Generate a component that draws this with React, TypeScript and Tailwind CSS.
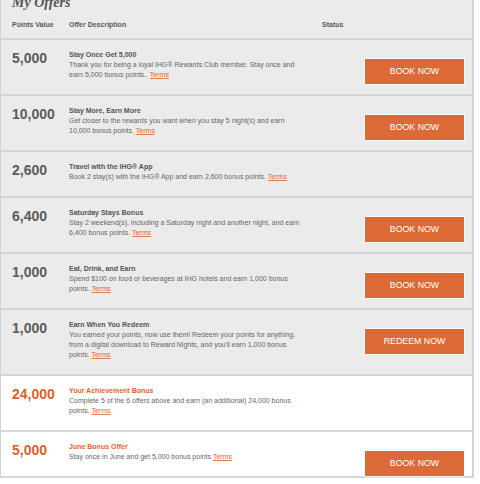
import React from "react";

type Offer = {
  points: string;
  title: string;
  lines: string[];
  action?: string;
  featured?: boolean;
};

const offers: Offer[] = [
  {
    points: "5,000",
    title: "Stay Once Get 5,000",
    lines: [
      "Thank you for being a loyal IHG® Rewards Club member. Stay once and",
      "earn 5,000 bonus points.. ",
    ],
    action: "BOOK NOW",
  },
  {
    points: "10,000",
    title: "Stay More, Earn More",
    lines: [
      "Get closer to the rewards you want when you stay 5 night(s) and earn",
      "10,000 bonus points. ",
    ],
    action: "BOOK NOW",
  },
  {
    points: "2,600",
    title: "Travel with the IHG® App",
    lines: ["Book 2 stay(s) with the IHG® App and earn 2,600 bonus points. "],
  },
  {
    points: "6,400",
    title: "Saturday Stays Bonus",
    lines: [
      "Stay 2 weekend(s), including a Saturday night and another night, and earn",
      "6,400 bonus points. ",
    ],
    action: "BOOK NOW",
  },
  {
    points: "1,000",
    title: "Eat, Drink, and Earn",
    lines: [
      "Spend $100 on food or beverages at IHG hotels and earn 1,000 bonus",
      "points. ",
    ],
    action: "BOOK NOW",
  },
  {
    points: "1,000",
    title: "Earn When You Redeem",
    lines: [
      "You earned your points, now use them! Redeem your points for anything,",
      "from a digital download to Reward Nights, and you'll earn 1,000 bonus",
      "points. ",
    ],
    action: "REDEEM NOW",
  },
  {
    points: "24,000",
    title: "Your Achievement Bonus",
    lines: [
      "Complete 5 of the 6 offers above and earn (an additional) 24,000 bonus",
      "points. ",
    ],
    featured: true,
  },
  {
    points: "5,000",
    title: "June Bonus Offer",
    lines: ["Stay once in June and get 5,000 bonus points "],
    action: "BOOK NOW",
    featured: true,
  },
];

function OfferRow({ offer }: { offer: Offer }) {
  const last = offer.lines.length - 1;
  return (
    <div
      className={`flex items-start border-b-2 border-[#d6d6d6] pl-[11px] ${
        offer.featured ? "bg-white" : "bg-[#ebebeb]"
      }`}
    >
      <div
        className={`w-[57px] shrink-0 pt-[10px] text-[14px] font-bold leading-[16px] ${
          offer.featured ? "text-[#dc5f2c]" : "text-[#5b5b5b]"
        }`}
      >
        {offer.points}
      </div>
      <div className="w-[253px] shrink-0 pt-[10px] pb-[14px] text-[7px] leading-[10px]">
        <div
          className={`whitespace-nowrap font-bold ${
            offer.featured ? "text-[#dd6535]" : "text-[#555555]"
          }`}
        >
          {offer.title}
        </div>
        {offer.lines.map((line, i) => (
          <div key={i} className="whitespace-nowrap text-[#666666]">
            {line}
            {i === last && (
              <span className="text-[#d9663a] underline decoration-[#e07a50] underline-offset-1">
                Terms
              </span>
            )}
          </div>
        ))}
      </div>
      <div className="flex flex-1 justify-end pr-[8px] pt-[19px]">
        {offer.action && (
          <button className="flex h-[25px] w-[99px] items-center justify-center bg-[#db6a36] text-[8.8px] text-white shadow-[0_0_0_1px_rgba(255,255,255,0.75)]">
            {offer.action}
          </button>
        )}
      </div>
    </div>
  );
}

export default function App() {
  return (
    <div
      className="min-h-[484px] overflow-hidden bg-white"
      style={{ fontFamily: '"Liberation Sans", Arial, sans-serif' }}
    >
      <div className="w-[474px] border-l border-r-2 border-[#d3d3d3] bg-[#ebebeb]">
        <div className="border-b-2 border-[#d6d6d6] pl-[11px] pb-[8px]">
          <div
            className="-mt-[4px] h-[14px] text-[14px] font-bold italic leading-[14px] text-[#555555]"
            style={{ fontFamily: '"Liberation Serif", Georgia, serif' }}
          >
            My Offers
          </div>
          <div className="mt-[10px] flex text-[7px] font-bold leading-[10px] text-[#5a5a5a]">
            <div className="w-[57px] shrink-0">Points Value</div>
            <div className="w-[253px] shrink-0">Offer Description</div>
            <div>Status</div>
          </div>
        </div>
        {offers.map((o, i) => (
          <OfferRow key={i} offer={o} />
        ))}
      </div>
    </div>
  );
}
